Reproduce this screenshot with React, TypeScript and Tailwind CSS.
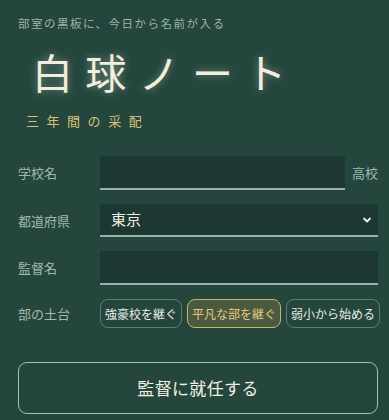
import React, { useState } from "react";

const sans = { fontFamily: '"Noto Sans CJK JP", "Noto Sans", sans-serif' };

export default function App() {
  const [base, setBase] = useState(1);
  const bases = ["強豪校を継ぐ", "平凡な部を継ぐ", "弱小から始める"];
  return (
    <div
      className="w-[389px] h-[420px] overflow-hidden bg-[#24463d] pl-[18px] pr-[11px] pt-[13px]"
      style={sans}
    >
      <p className="text-[11.5px] leading-[20px] tracking-[0.13em] text-[#9db3a9]">
        部室の黒板に、今日から名前が入る
      </p>
      <h1
        className="mt-[14px] ml-[14px] text-[41px] leading-[48px] font-normal tracking-[0.3em] text-[#f1eedf] [text-shadow:0_0_8px_rgba(240,236,210,0.45)]"
      >
        白球ノート
      </h1>
      <p className="mt-[16px] ml-[8px] text-[13px] leading-[20px] tracking-[0.58em] text-[#d8c27a]">
        三年間の采配
      </p>

      <div className="mt-[25px] grid grid-cols-[82px_minmax(0,1fr)] items-center gap-y-[14px]">
        <label className="text-[13px] text-[#a3b8ae]">学校名</label>
        <div className="flex items-center gap-[7px]">
          <div className="h-[34px] flex-1 bg-[#1d3832] border-b-2 border-[#9cb0a7]" />
          <span className="text-[13px] text-[#a3b8ae]">高校</span>
        </div>

        <label className="text-[13px] text-[#a3b8ae]">都道府県</label>
        <div className="h-[33px] bg-[#1d3832] border-b-2 border-[#9cb0a7] flex items-center justify-between pl-[11px] pr-[6px]">
          <span className="text-[15px] text-[#f1eee2]">東京</span>
          <svg width="10" height="10" viewBox="0 0 10 10" fill="none">
            <path d="M2 3.5 L5 6.5 L8 3.5" stroke="#eef0ea" strokeWidth="1.8" strokeLinecap="round" strokeLinejoin="round" />
          </svg>
        </div>

        <label className="text-[13px] text-[#a3b8ae]">監督名</label>
        <div className="h-[34px] bg-[#1d3832] border-b-2 border-[#9cb0a7]" />

        <label className="text-[13px] text-[#a3b8ae]">部の土台</label>
        <div className="flex gap-[5px] justify-between">
          {bases.map((b, i) => (
            <button
              key={b}
              onClick={() => setBase(i)}
              className={
                i === base
                  ? "h-[29px] px-[4px] rounded-[8px] border border-[#c7b56c] bg-[#4b5a3f] text-[12px] text-[#e0cb84] whitespace-nowrap"
                  : "h-[29px] px-[4px] rounded-[8px] border border-[#5f7d72] bg-[#24463d] text-[12px] text-[#e6ebe6] whitespace-nowrap"
              }
            >
              {b}
            </button>
          ))}
        </div>
      </div>

      <button className="mt-[34px] w-full h-[52px] rounded-[9px] border-[1.5px] border-[#a9c0b6] text-[17px] text-[#f1eee2] tracking-[0.02em]">
        監督に就任する
      </button>
    </div>
  );
}
